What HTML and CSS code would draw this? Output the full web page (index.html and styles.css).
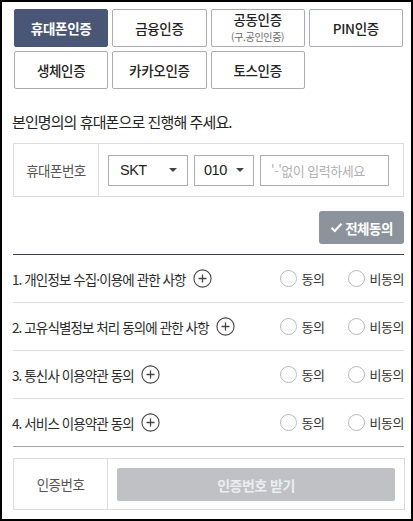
FILE: index.html
```html
<!DOCTYPE html>
<html lang="ko">
<head>
<meta charset="utf-8">
<link rel="stylesheet" href="styles.css">
</head>
<body>
<div class="page">
  <div class="tabs">
    <div class="tab active">휴대폰인증</div>
    <div class="tab">금융인증</div>
    <div class="tab two"><span class="main">공동인증</span><span class="sub">(구.공인인증)</span></div>
    <div class="tab">PIN인증</div>
    <div class="tab">생체인증</div>
    <div class="tab">카카오인증</div>
    <div class="tab">토스인증</div>
  </div>

  <p class="guide">본인명의의 휴대폰으로 진행해 주세요.</p>

  <div class="phone-box">
    <div class="label">휴대폰번호</div>
    <div class="fields">
      <div class="select carrier">SKT<span class="caret"></span></div>
      <div class="select prefix">010<span class="caret"></span></div>
      <div class="input">'-'없이 입력하세요</div>
    </div>
  </div>

  <div class="all-row">
    <div class="all-btn">
      <svg width="13" height="11" viewBox="0 0 13 11"><polyline points="1.5,5.8 4.8,9 11.5,1.8" fill="none" stroke="#fff" stroke-width="2.2"/></svg>
      <span>전체동의</span>
    </div>
  </div>

  <div class="terms">
    <div class="term">
      <div class="title">1. 개인정보 수집·이용에 관한 사항 <svg class="plus" width="19" height="19" viewBox="0 0 19 19"><circle cx="9.5" cy="9.5" r="8.6" fill="none" stroke="#444" stroke-width="1.1"/><path d="M5.5 9.5h8M9.5 5.5v8" stroke="#444" stroke-width="1.3"/></svg></div>
      <div class="radios"><span class="radio"><i></i>동의</span><span class="radio"><i></i>비동의</span></div>
    </div>
    <div class="term">
      <div class="title">2. 고유식별정보 처리 동의에 관한 사항 <svg class="plus" width="19" height="19" viewBox="0 0 19 19"><circle cx="9.5" cy="9.5" r="8.6" fill="none" stroke="#444" stroke-width="1.1"/><path d="M5.5 9.5h8M9.5 5.5v8" stroke="#444" stroke-width="1.3"/></svg></div>
      <div class="radios"><span class="radio"><i></i>동의</span><span class="radio"><i></i>비동의</span></div>
    </div>
    <div class="term">
      <div class="title">3. 통신사 이용약관 동의 <svg class="plus" width="19" height="19" viewBox="0 0 19 19"><circle cx="9.5" cy="9.5" r="8.6" fill="none" stroke="#444" stroke-width="1.1"/><path d="M5.5 9.5h8M9.5 5.5v8" stroke="#444" stroke-width="1.3"/></svg></div>
      <div class="radios"><span class="radio"><i></i>동의</span><span class="radio"><i></i>비동의</span></div>
    </div>
    <div class="term last">
      <div class="title">4. 서비스 이용약관 동의 <svg class="plus" width="19" height="19" viewBox="0 0 19 19"><circle cx="9.5" cy="9.5" r="8.6" fill="none" stroke="#444" stroke-width="1.1"/><path d="M5.5 9.5h8M9.5 5.5v8" stroke="#444" stroke-width="1.3"/></svg></div>
      <div class="radios"><span class="radio"><i></i>동의</span><span class="radio"><i></i>비동의</span></div>
    </div>
  </div>

  <div class="code-box">
    <div class="label">인증번호</div>
    <div class="code-cell"><div class="code-btn">인증번호 받기</div></div>
  </div>
</div>
</body>
</html>
```

FILE: styles.css
```css
* { box-sizing: border-box; }
html, body { margin: 0; padding: 0; }
body {
  width: 413px;
  height: 521px;
  border: 2px solid #000;
  background: #fff;
  font-family: "Noto Sans CJK KR", "Noto Sans", sans-serif;
  color: #222;
  overflow: hidden;
}
.page {
  padding: 7px 7px 0 11px;
}
.tabs {
  display: grid;
  grid-template-columns: repeat(4, 1fr);
  gap: 4px;
  margin: 0 1px;
}
.tab {
  height: 38px;
  border: 1px solid #a9adb3;
  border-radius: 2px;
  display: flex;
  align-items: center;
  justify-content: center;
  font-size: 13.5px;
  font-weight: 500;
  letter-spacing: -0.3px;
  color: #222;
  background: #fff;
}
.tab.active {
  background: #4a5675;
  border-color: #4a5675;
  color: #fff;
  font-weight: 700;
}
.tab.two {
  flex-direction: column;
  padding-bottom: 3px;
}
.tab .main {
  display: block;
  line-height: 18px;
}
.tab .sub {
  display: block;
  line-height: 13px;
  margin-top: 2px;
  font-size: 10px;
  font-weight: 400;
  letter-spacing: -0.3px;
  color: #666;
}
.guide {
  margin: 23px 0 0 -1px;
  font-size: 15px;
  line-height: 20px;
  letter-spacing: -0.9px;
  color: #222;
}
.phone-box {
  margin-top: 11px;
  height: 54px;
  border: 1px solid #dcdcdc;
  display: flex;
}
.label {
  width: 85px;
  border-right: 1px solid #dcdcdc;
  display: flex;
  align-items: center;
  justify-content: center;
  font-size: 13.5px;
  color: #555;
  letter-spacing: -0.5px;
}
.fields {
  display: flex;
  align-items: center;
  gap: 6px;
  padding-left: 9px;
}
.select, .input {
  height: 31px;
  border: 1px solid #a9adb3;
  display: flex;
  align-items: center;
  font-size: 14px;
  color: #222;
  letter-spacing: -0.5px;
}
.select {
  justify-content: space-between;
  padding: 0 10px 0 11px;
  font-family: "Liberation Sans", "Noto Sans", sans-serif;
  font-size: 14.5px;
}
.carrier { width: 80px; }
.prefix { width: 60px; padding-left: 9px; padding-right: 9px; }
.caret {
  width: 0;
  height: 0;
  border-left: 4px solid transparent;
  border-right: 4px solid transparent;
  border-top: 4px solid #444;
}
.input {
  width: 129px;
  padding-left: 10px;
  color: #b0b0b0;
  font-size: 13px;
}
.all-row {
  display: flex;
  justify-content: flex-end;
  margin-top: 14px;
}
.all-btn {
  width: 85px;
  height: 33px;
  border-radius: 3px;
  background: #8c939d;
  color: #fff;
  display: flex;
  align-items: center;
  justify-content: center;
  gap: 2px;
  font-size: 13.5px;
  font-weight: 700;
  letter-spacing: -0.5px;
}
.terms {
  margin-top: 10px;
  border-top: 1px solid #3d4249;
}
.term {
  height: 48px;
  border-bottom: 1px solid #dcdde5;
  display: flex;
  align-items: center;
  justify-content: space-between;
}
.term.last { border-bottom-color: #a4a7ad; }
.title {
  display: flex;
  align-items: center;
  gap: 4px;
  margin-left: -1px;
  font-size: 13.5px;
  letter-spacing: -0.9px;
  color: #2a2a2a;
  white-space: pre;
}
.plus { flex: none; }
.radios {
  display: flex;
}
.radio {
  display: flex;
  align-items: center;
  gap: 5px;
  font-size: 13px;
  color: #333;
  letter-spacing: -0.5px;
}
.radio:first-child { width: 68px; }
.radio i {
  width: 17px;
  height: 17px;
  border: 1px solid #b4b7bc;
  border-radius: 50%;
  display: block;
}
.code-box {
  margin-top: 11px;
  height: 52px;
  border: 1px solid #dcdcdc;
  display: flex;
  margin-right: -1px;
}
.code-box .label { width: 94px; }
.code-cell {
  flex: 1;
  padding: 9px;
}
.code-btn {
  height: 33px;
  border-radius: 2px;
  background: #bfc1c5;
  color: #eceef0;
  display: flex;
  align-items: center;
  justify-content: center;
  font-size: 14px;
  font-weight: 700;
  letter-spacing: -0.5px;
}
```
